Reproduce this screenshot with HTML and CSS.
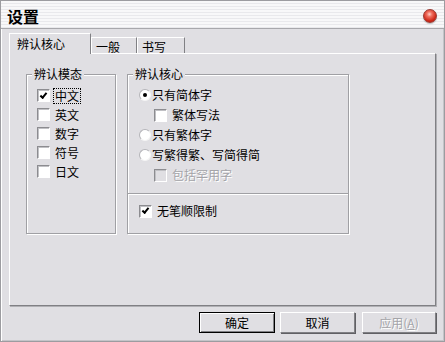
FILE: index.html
```html
<!DOCTYPE html>
<html lang="zh-CN">
<head>
  <meta charset="UTF-8" />
  <title>设置</title>
  <link rel="stylesheet" href="styles.css">
</head>
<body>
  <div class="window">
    <div class="titlebar">
      <span class="title">设置</span>
      <span class="close"></span>
    </div>

    <div class="content">
      <div class="tabs">
        <div class="tab active">辨认核心</div>
        <div class="tab">一般</div>
        <div class="tab">书写</div>
      </div>

      <div class="panel">
        <fieldset class="group mode">
          <legend>辨认模态</legend>
          <div class="mode-list">
            <div class="row"><span class="check checked"></span><span class="label focus">中文</span></div>
            <div class="row"><span class="check"></span><span class="label">英文</span></div>
            <div class="row"><span class="check"></span><span class="label">数字</span></div>
            <div class="row"><span class="check"></span><span class="label">符号</span></div>
            <div class="row"><span class="check"></span><span class="label">日文</span></div>
          </div>
        </fieldset>

        <fieldset class="group core">
          <legend>辨认核心</legend>
          <div class="core-top">
            <div class="row"><span class="radio on"></span><span class="label">只有简体字</span></div>
            <div class="row sub"><span class="check"></span><span class="label">繁体写法</span></div>
            <div class="row"><span class="radio"></span><span class="label">只有繁体字</span></div>
            <div class="row"><span class="radio"></span><span class="label">写繁得繁、写简得简</span></div>
            <div class="row sub disabled"><span class="check"></span><span class="label">包括罕用字</span></div>
          </div>
          <div class="core-bottom">
            <div class="row"><span class="check checked"></span><span class="label">无笔顺限制</span></div>
          </div>
        </fieldset>
      </div>

      <div class="buttons">
        <button class="btn default">确定</button>
        <button class="btn cancel">取消</button>
        <button class="btn apply" disabled>应用(<u>A</u>)</button>
      </div>
    </div>
  </div>
</body>
</html>
```

FILE: styles.css
```css
html, body {
  margin: 0;
  padding: 0;
}
body {
  font-family: "Noto Sans CJK SC", "Liberation Sans", sans-serif;
  font-size: 12px;
  color: #000;
  background-color: #e0dfe3;
}
.window {
  width: 445px;
  height: 342px;
  box-sizing: border-box;
  border: 1px solid #9c9ca0;
  box-shadow: inset 1px 1px 0 #fff, inset -1px -1px 0 #c4c4c8;
  background-color: #e0dfe3;
}
.titlebar {
  height: 27px;
  border-bottom: 1px solid #a8a8ac;
  display: flex;
  align-items: center;
  justify-content: space-between;
  padding: 0 7px 0 6px;
  background: repeating-linear-gradient(#f8f8f9 0 2px, #e9e9ec 2px 3px);
}
.title {
  font-size: 16px;
  font-weight: bold;
  line-height: 16px;
  margin-top: 2px;
}
.close {
  width: 14px;
  height: 14px;
  border-radius: 50%;
  margin-top: 3px;
  box-sizing: border-box;
  border: 1px solid #9a3a32;
  background: radial-gradient(circle at 45% 35%, #ffd0c8 0, #f07060 25%, #d02818 65%, #a01a10 100%);
  box-shadow: 0 1px 1px rgba(0,0,0,0.25);
}
.content {
  padding: 4px 8px 0 8px;
}

/* tabs */
.tabs {
  display: flex;
  align-items: flex-end;
  height: 20px;
}
.tab {
  box-sizing: border-box;
  height: 16px;
  line-height: 14px;
  padding: 2px 0 0 4px;
  border-top: 1px solid #fff;
  border-left: 1px solid #fff;
  border-right: 1px solid #808084;
}
.tab:nth-child(2) { width: 46px; }
.tab:nth-child(3) { width: 48px; }
.tab.active {
  width: 82px;
  height: 21px;
  padding: 3px 0 0 7px;
  margin-bottom: -1px;
  position: relative;
  z-index: 1;
  background-color: #e0dfe3;
}

/* panel */
.panel {
  box-sizing: border-box;
  width: 427px;
  height: 253px;
  border-top: 1px solid #fff;
  border-left: 1px solid #fff;
  border-right: 1px solid #808084;
  border-bottom: 1px solid #808084;
  box-shadow: 1px 1px 0 #b0b0b4;
  display: flex;
  align-items: flex-start;
  gap: 11px;
  padding: 13px 0 0 16px;
}
.group {
  box-sizing: border-box;
  margin: 0;
  padding: 0;
  height: 167px;
  border: 1px solid #a0a0a4;
  box-shadow: inset 1px 1px 0 #fff, 1px 1px 0 #fff;
}
.group legend {
  margin-left: 5px;
  padding: 0 2px;
  line-height: 14px;
  background-color: #e0dfe3;
}
.mode {
  width: 90px;
}
.mode-list {
  padding: 5px 0 0 10px;
}
.core {
  width: 222px;
}
.core-top {
  height: 113px;
  box-sizing: border-box;
  padding: 4px 0 0 11px;
  border-bottom: 1px solid #a0a0a4;
  box-shadow: 0 1px 0 #fff;
}
.core-bottom {
  padding: 7px 0 0 11px;
}

/* rows */
.row {
  display: flex;
  align-items: center;
  height: 19px;
}
.core .row {
  height: 20px;
}
.core-top .row.sub {
  padding-left: 15px;
}
.label {
  margin-left: 5px;
  line-height: 14px;
}
.radio + .label {
  margin-left: 1px;
}
.focus {
  outline: 1px dotted #000;
  outline-offset: 0;
  padding: 0 1px;
  margin-left: 4px;
}
.check {
  box-sizing: border-box;
  width: 13px;
  height: 13px;
  flex: none;
  background-color: #fff;
  border: 1px solid;
  border-color: #8c8c90 #fff #fff #8c8c90;
  box-shadow: inset 1px 1px 0 #c0c0c4;
  display: flex;
  align-items: center;
  justify-content: center;
}
.check.checked::after {
  content: "";
  width: 5px;
  height: 2px;
  border-left: 2px solid #000;
  border-bottom: 2px solid #000;
  transform: rotate(-50deg);
  margin-top: -2px;
}
.radio {
  box-sizing: border-box;
  width: 12px;
  height: 12px;
  flex: none;
  border-radius: 50%;
  background-color: #fff;
  border: 1px solid;
  border-color: #b4b4b8 #f4f4f4 #f4f4f4 #b4b4b8;
  display: flex;
  align-items: center;
  justify-content: center;
}
.radio.on::after {
  content: "";
  width: 4px;
  height: 4px;
  border-radius: 50%;
  background-color: #000;
}
.disabled .check {
  background-color: #e0dfe3;
}
.disabled .label {
  color: #a4a4a8;
  text-shadow: 1px 1px 0 #fff;
}

/* buttons */
.buttons {
  display: flex;
  justify-content: flex-end;
  margin-top: 6px;
  padding-right: 0;
}
.btn {
  box-sizing: border-box;
  height: 21px;
  width: 75px;
  padding: 0;
  font-family: inherit;
  font-size: 12px;
  color: #000;
  background-color: #e0dfe3;
  border: 1px solid;
  border-color: #fff #808084 #808084 #fff;
  box-shadow: 1px 1px 0 #606064;
}
.btn.default {
  width: 76px;
  border: 1px solid #000;
  box-shadow: inset 1px 1px 0 #fff, inset -1px -1px 0 #808084;
}
.btn.cancel {
  margin-left: 5px;
}
.btn.apply {
  width: 74px;
  margin-left: 7px;
  color: #a4a4a8;
  text-shadow: 1px 1px 0 #fff;
}
```
